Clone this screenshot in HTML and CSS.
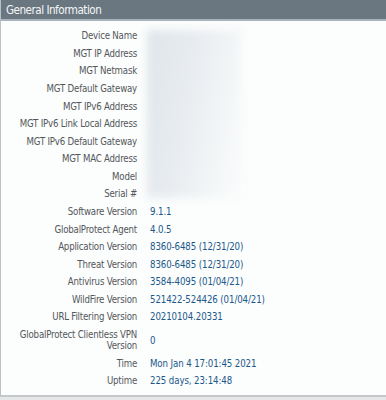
FILE: index.html
```html
<!DOCTYPE html>
<html>
<head>
<meta charset="utf-8">
<link rel="stylesheet" href="styles.css">
</head>
<body>
<div class="panel">
  <div class="header">General Information</div>
  <div class="body">
    <div class="grid">
      <div class="lbl">Device Name</div><div class="val"></div>
      <div class="lbl">MGT IP Address</div><div class="val"></div>
      <div class="lbl">MGT Netmask</div><div class="val"></div>
      <div class="lbl">MGT Default Gateway</div><div class="val"></div>
      <div class="lbl">MGT IPv6 Address</div><div class="val"></div>
      <div class="lbl">MGT IPv6 Link Local Address</div><div class="val"></div>
      <div class="lbl">MGT IPv6 Default Gateway</div><div class="val"></div>
      <div class="lbl">MGT MAC Address</div><div class="val"></div>
      <div class="lbl">Model</div><div class="val"></div>
      <div class="lbl">Serial #</div><div class="val"></div>
      <div class="lbl">Software Version</div><div class="val">9.1.1</div>
      <div class="lbl">GlobalProtect Agent</div><div class="val">4.0.5</div>
      <div class="lbl">Application Version</div><div class="val">8360-6485 (12/31/20)</div>
      <div class="lbl">Threat Version</div><div class="val">8360-6485 (12/31/20)</div>
      <div class="lbl">Antivirus Version</div><div class="val">3584-4095 (01/04/21)</div>
      <div class="lbl">WildFire Version</div><div class="val">521422-524426 (01/04/21)</div>
      <div class="lbl">URL Filtering Version</div><div class="val">20210104.20331</div>
      <div class="lbl">GlobalProtect Clientless VPN Version</div><div class="val">0</div>
      <div class="lbl">Time</div><div class="val">Mon Jan 4 17:01:45 2021</div>
      <div class="lbl">Uptime</div><div class="val">225 days, 23:14:48</div>
    </div>
    <div class="redact"></div>
  </div>
</div>
</body>
</html>
```
FILE: styles.css
```css
html, body {
  margin: 0;
  padding: 0;
  background: #e6e7e8;
}
body {
  width: 386px;
  height: 400px;
  font-family: "DejaVu Sans Condensed", "Liberation Sans", Arial, sans-serif;
  font-size: 9.6px;
}
.panel {
  width: 385px;
  border-left: 1px solid #b9c0c6;
  border-bottom: 2px solid #c4c8cb;
  background: #fcfdfd;
}
.header {
  height: 19px;
  background: #6a7680;
  border-bottom: 2px solid #a9b3bb;
  color: #f4f6f7;
  font-size: 11.6px;
  line-height: 20px;
  padding-left: 5px;
  letter-spacing: -0.5px;
}
.body {
  position: relative;
  padding: 6px 0 5px 0;
}
.grid {
  display: grid;
  grid-template-columns: 136px 1fr;
  column-gap: 13px;
}
.lbl {
  text-align: right;
  color: #53575b;
  line-height: 11.2px;
  padding: 3.2px 0 3.2px 14px;
  align-self: center;
  letter-spacing: -0.2px;
}
.val {
  color: #195889;
  line-height: 11.2px;
  padding: 3.2px 0;
  align-self: center;
  letter-spacing: -0.1px;
}
.redact {
  position: absolute;
  left: 146px;
  top: 9px;
  width: 95px;
  height: 168px;
  background: linear-gradient(100deg, #dfe5ea 0%, #e8ecf0 40%, #f3f6f7 75%, #fbfcfc 100%);
  filter: blur(4px);
}
```
